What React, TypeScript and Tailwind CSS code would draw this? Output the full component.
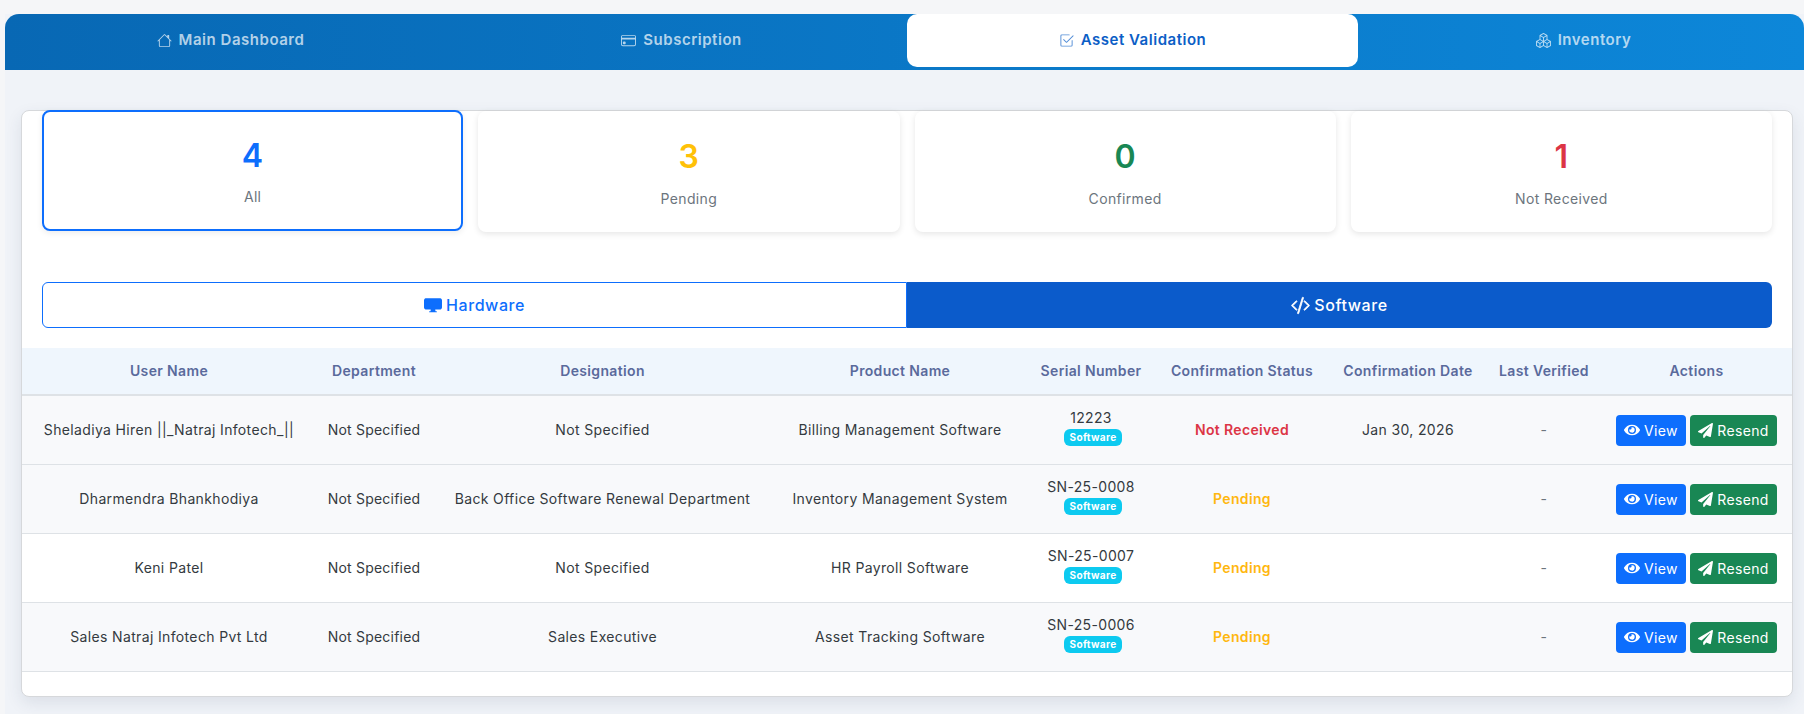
import React from 'react';
import { BsHouse, BsCreditCard, BsCheck2Square, BsBoxes, BsCodeSlash, BsDisplayFill } from 'react-icons/bs';
import { FaEye, FaPaperPlane } from 'react-icons/fa';

const tabs = [
  { label: 'Main Dashboard', icon: BsHouse },
  { label: 'Subscription', icon: BsCreditCard },
  { label: 'Asset Validation', icon: BsCheck2Square, active: true },
  { label: 'Inventory', icon: BsBoxes },
];

const stats = [
  { value: '4', label: 'All', color: 'text-[#0d6efd]', active: true },
  { value: '3', label: 'Pending', color: 'text-[#ffc107]' },
  { value: '0', label: 'Confirmed', color: 'text-[#198754]' },
  { value: '1', label: 'Not Received', color: 'text-[#dc3545]' },
];

const headers = [
  'User Name',
  'Department',
  'Designation',
  'Product Name',
  'Serial Number',
  'Confirmation Status',
  'Confirmation Date',
  'Last Verified',
  'Actions',
];

const rows = [
  {
    user: 'Sheladiya Hiren ||_Natraj Infotech_||',
    designation: 'Not Specified',
    product: 'Billing Management Software',
    serial: '12223',
    status: 'Not Received',
    date: 'Jan 30, 2026',
    bg: 'bg-[#f8f9fb]',
  },
  {
    user: 'Dharmendra Bhankhodiya',
    designation: 'Back Office Software Renewal Department',
    product: 'Inventory Management System',
    serial: 'SN-25-0008',
    status: 'Pending',
    date: '',
    bg: 'bg-[#f8f9fb]',
  },
  {
    user: 'Keni Patel',
    designation: 'Not Specified',
    product: 'HR Payroll Software',
    serial: 'SN-25-0007',
    status: 'Pending',
    date: '',
    bg: 'bg-white',
  },
  {
    user: 'Sales Natraj Infotech Pvt Ltd',
    designation: 'Sales Executive',
    product: 'Asset Tracking Software',
    serial: 'SN-25-0006',
    status: 'Pending',
    date: '',
    bg: 'bg-[#f8f9fb]',
  },
];

export default function App() {
  return (
    <div className="h-[714px] overflow-hidden bg-[#f5f6f8] pt-[14px] pl-[5px] font-['Inter',sans-serif] text-[14px] tracking-[0.025em]">
      <div className="h-[700px] bg-[#f0f3f8]">
        {/* Tabs */}
        <div className="flex h-[56px] overflow-hidden rounded-t-[14px] bg-gradient-to-r from-[#0868b4] to-[#0d87d9]">
          {tabs.map((tab) => {
            const Icon = tab.icon;
            return (
              <div
                key={tab.label}
                className={`flex h-[53px] w-[451px] shrink-0 items-center justify-center gap-[7px] rounded-[10px] text-[15px] font-semibold tracking-[0.035em] ${
                  tab.active ? 'bg-white text-[#0b5ec6]' : 'text-white/70'
                }`}
              >
                <Icon className={`h-[15px] w-[15px] ${tab.active ? 'opacity-70' : ''}`} />
                {tab.label}
              </div>
            );
          })}
        </div>

        {/* Main card */}
        <div className="mt-[40px] ml-[16px] h-[587px] w-[1772px] rounded-[8px] border border-[#d6d8db] bg-white shadow-[0_6px_16px_rgba(40,60,90,0.1)]">
          <div className="grid grid-cols-4 gap-[15px] px-[20px]">
            {stats.map((stat) => (
              <div
                key={stat.label}
                className={`flex flex-col items-center rounded-[8px] bg-white ${
                  stat.active
                    ? 'h-[121px] -translate-y-[1px] border-2 border-[#0d6efd] pt-[20px] shadow-[0_2px_6px_rgba(0,0,0,0.08)]'
                    : 'h-[121px] pt-[22px] shadow-[0_2px_6px_rgba(0,0,0,0.1)]'
                }`}
              >
                <span className={`text-[32px] leading-[48px] font-semibold ${stat.color}`}>{stat.value}</span>
                <span className={`${stat.active ? 'mt-[6px]' : 'mt-[7px]'} leading-[21px] text-[#6c757d]`}>{stat.label}</span>
              </div>
            ))}
          </div>

          {/* Hardware / Software toggle */}
          <div className="mx-[20px] mt-[50px] flex h-[46px] text-[16px] font-medium tracking-[0.035em]">
            <div className="flex w-[865px] items-center justify-center gap-[4px] rounded-l-[6px] border border-[#0d6efd] text-[#0d6efd]">
              <BsDisplayFill className="h-[18px] w-[18px]" />
              Hardware
            </div>
            <div className="flex flex-1 items-center justify-center gap-[4px] rounded-r-[6px] bg-[#0b5bcb] text-white">
              <BsCodeSlash className="h-[19px] w-[19px]" stroke="currentColor" strokeWidth={0.7} />
              Software
            </div>
          </div>

          {/* Table */}
          <table className="mt-[20px] w-full table-fixed border-collapse text-center">
            <colgroup>
              <col className="w-[294px]" />
              <col className="w-[116px]" />
              <col className="w-[341px]" />
              <col className="w-[254px]" />
              <col className="w-[128px]" />
              <col className="w-[174px]" />
              <col className="w-[158px]" />
              <col className="w-[114px]" />
              <col />
            </colgroup>
            <thead>
              <tr className="h-[47px] border-b-2 border-[#dee2e6] bg-[#eff6fd]">
                {headers.map((h) => (
                  <th key={h} className="pb-[2px] font-semibold whitespace-nowrap text-[#5a6a9c]">
                    {h}
                  </th>
                ))}
              </tr>
            </thead>
            <tbody>
              {rows.map((row) => (
                <tr key={row.serial} className={`h-[69px] border-b border-[#dee2e6] text-[#343a40] ${row.bg}`}>
                  <td className="whitespace-nowrap">{row.user}</td>
                  <td className="whitespace-nowrap tracking-[0.015em]">Not Specified</td>
                  <td className="whitespace-nowrap">{row.designation}</td>
                  <td className="whitespace-nowrap">{row.product}</td>
                  <td>
                    <div className="flex flex-col items-center gap-[1px] pb-[6px]">
                      <span className="leading-[21px]">{row.serial}</span>
                      <span className="ml-[4px] flex h-[17px] w-[58px] items-center justify-center rounded-[6px] bg-[#0dcaf0] text-[10px] font-bold text-white">
                        Software
                      </span>
                    </div>
                  </td>
                  <td className={`font-semibold ${row.status === 'Pending' ? 'text-[#ffb70f]' : 'text-[#dc3545]'}`}>
                    {row.status}
                  </td>
                  <td>{row.date}</td>
                  <td className="text-[#6c757d]">-</td>
                  <td>
                    <div className="mt-[1px] flex justify-center gap-[4px]">
                      <button className="flex h-[31px] w-[70px] items-center justify-center gap-[4px] rounded-[4px] bg-[#0d6efd] text-white">
                        <FaEye className="h-[16px] w-[16px]" />
                        View
                      </button>
                      <button className="flex h-[31px] w-[87px] items-center justify-center gap-[4px] rounded-[4px] bg-[#198754] text-white">
                        <FaPaperPlane className="h-[15px] w-[15px]" />
                        Resend
                      </button>
                    </div>
                  </td>
                </tr>
              ))}
            </tbody>
          </table>
        </div>
      </div>
    </div>
  );
}
